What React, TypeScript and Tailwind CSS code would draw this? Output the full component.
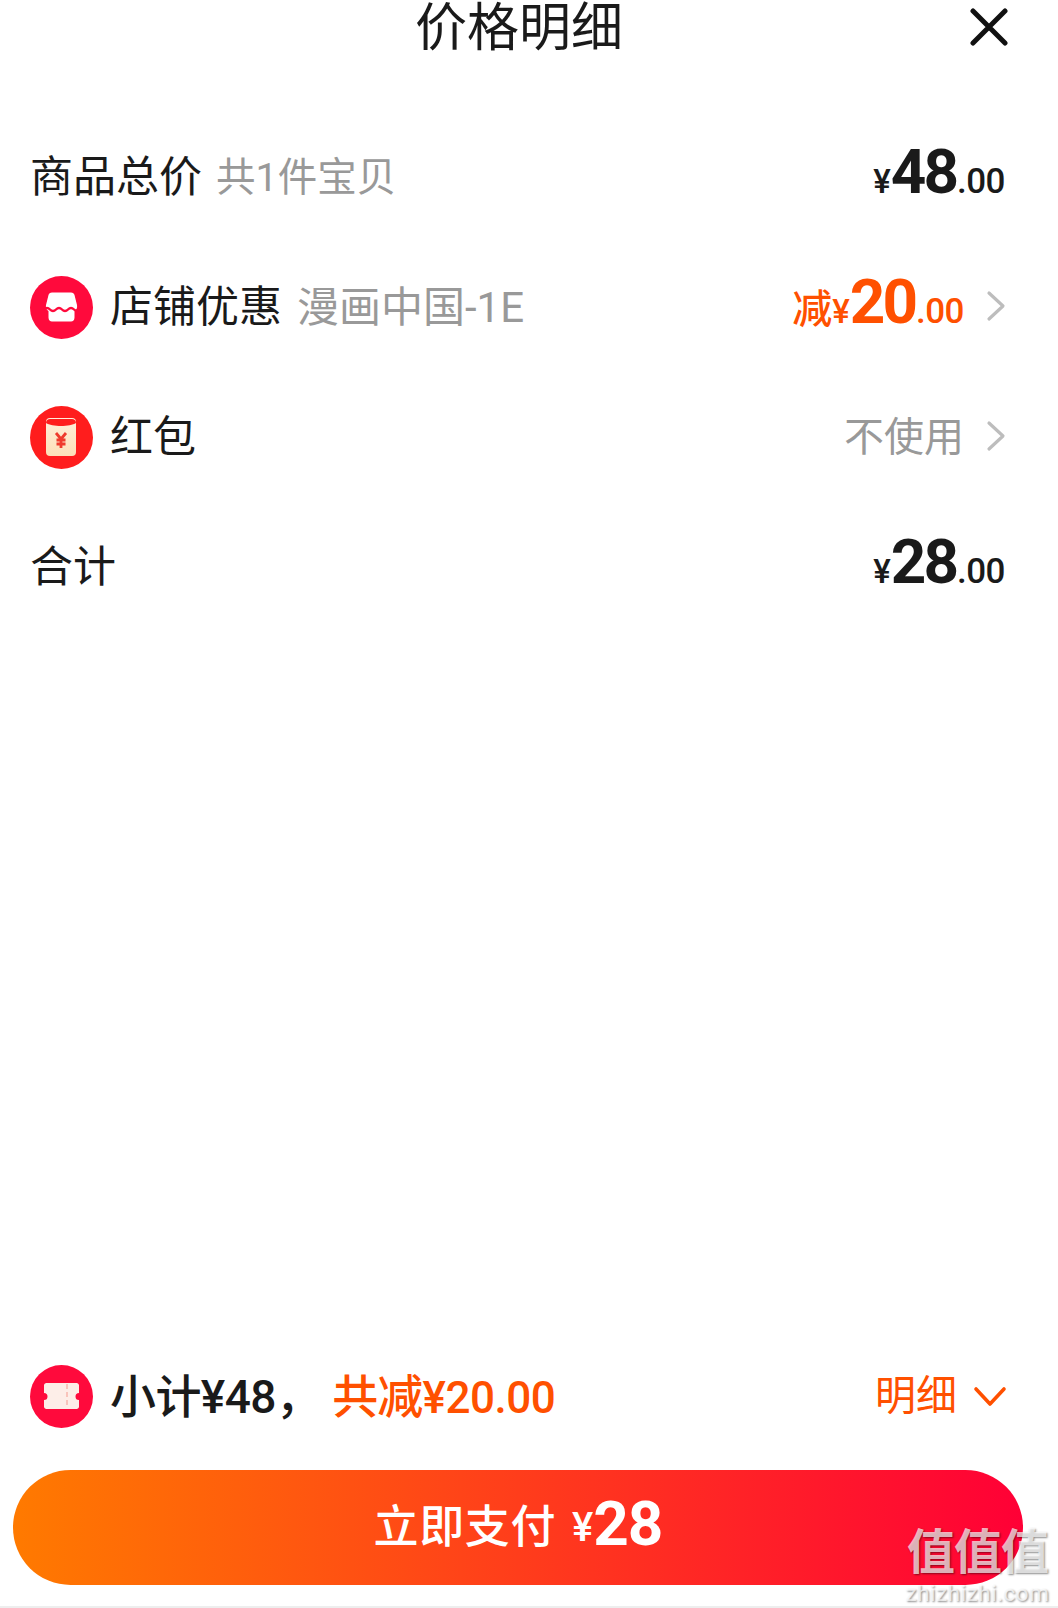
import React from "react";

const cjk = "font-['Roboto','Noto_Sans_CJK_SC',sans-serif]";

const Chevron = () => (
    <svg width="20" height="32" viewBox="0 0 20 32" fill="none" className="block">
        <path d="M3 3 L17 16 L3 29" stroke="#bdbdbd" strokeWidth="3.2" strokeLinecap="round" strokeLinejoin="round" />
    </svg>
);

const ShopIcon = () => (
    <svg width="63" height="63" viewBox="0 0 63 63" className="block shrink-0">
        <circle cx="31.5" cy="31.5" r="31.5" fill="#ff0a3c" />
        <path d="M22 16.500 H41 C43 16.500 44 17.500 44.500 19 L47 29 C47.500 32 46.500 34 44.500 35 V41.500 C44.500 44 43 45.500 41 45.500 H22 C20 45.500 18.500 44 18.500 41.500 V35 C16.500 34 15.500 32 16 29 L18.500 19 C19 17.500 20 16.500 22 16.500 Z" fill="#fff" />
        <path d="M14 33.500 C16 31.500 18 31.500 20 33.500 C22 35.500 24 35.500 26 33.500 C28 31.500 30 31.500 32 33.500 C34 35.500 36 35.500 38 33.500 C40 31.500 42 31.500 44 33.500 C46 35.500 48 34.500 49 33" stroke="#ff0a3c" strokeWidth="2.400" fill="none" />
    </svg>
);

const HongbaoIcon = () => (
    <svg width="63" height="63" viewBox="0 0 63 63" className="block shrink-0">
        <defs>
            <linearGradient id="env" x1="0" y1="0" x2="0" y2="1">
                <stop offset="0" stopColor="#ffeeda" />
                <stop offset="1" stopColor="#fde0b8" />
            </linearGradient>
        </defs>
        <circle cx="31.5" cy="31.5" r="31.5" fill="#ff1d1d" />
        <rect x="16" y="12" width="30" height="38" rx="4" fill="url(#env)" />
        <path d="M16 17 C16 14 18 13 20 13 H42 C44 13 46 14 46 17 C40 21 22 21 16 17 Z" fill="#ff1d1d" />
        <path d="M26 27 L31 33 L36 27 M31 33 V42 M26.500 34 H35.500 M26.500 38 H35.500" stroke="#ef3b2d" strokeWidth="2.800" fill="none" />
    </svg>
);

const TicketIcon = () => (
    <svg width="63" height="63" viewBox="0 0 63 63" className="block shrink-0">
        <circle cx="31.5" cy="31.5" r="31.5" fill="#ff0a3c" />
        <path d="M16.500 18 H46.500 C48 18 49 19 49 20.500 V28 A3.500 3.500 0 0 0 49 35 V41.500 C49 43 48 44 46.500 44 H16.500 C15 44 14 43 14 41.500 V35 A3.500 3.500 0 0 0 14 28 V20.500 C14 19 15 18 16.500 18 Z" fill="#fdeee8" />
        <path d="M37 19 V43" stroke="#f9c4bb" strokeWidth="2" strokeDasharray="5 3" />
    </svg>
);

// 金额: ¥ + big integer + small decimals
const Amount = ({ value, color }: { value: string; color: string }) => (
    <div className={`flex items-baseline font-['Roboto',sans-serif] ${color}`}>
        <span className="text-[33px] font-medium">¥</span>
        <span className="text-[62px] leading-none font-bold tracking-[-3px]">{value}</span>
        <span className="text-[35px] font-medium tracking-[-0.5px] ml-[1px]">.00</span>
    </div>
);

export default function App() {
    return (
        <div className={`relative w-[1058px] h-[1608px] bg-white overflow-hidden text-[#1a1a1a] ${cjk}`}>
            <div className="flex flex-col h-full">
                {/* header */}
                <div className="relative h-[58px] flex items-center justify-center">
                    <h1 className="text-[52px] leading-none font-normal mr-[20px]">价格明细</h1>
                    <svg width="38" height="38" viewBox="0 0 38 38" className="absolute right-[50px] top-[8px]">
                        <path d="M3 3 L35 35 M35 3 L3 35" stroke="#111" strokeWidth="5" strokeLinecap="round" />
                    </svg>
                </div>

                <div className="flex flex-col pl-[30px] pr-[53px] pt-[87px] gap-[65px]">
                    <div className="flex items-center justify-between h-[65px]">
                        <div className="flex items-center gap-[14px] text-[43px] leading-none">
                            <span>商品总价</span>
                            <span className="text-[39.5px] text-[#999]">共1件宝贝</span>
                        </div>
                        <div className="mb-[6px]"><Amount value="48" color="text-[#1a1a1a]" /></div>
                    </div>

                    <div className="flex items-center justify-between h-[65px]">
                        <div className="flex items-center text-[42px] leading-none">
                            <ShopIcon />
                            <span className="ml-[17px] text-[43px]">店铺优惠</span>
                            <span className="ml-[15px] text-[#999]">漫画中国-1E</span>
                        </div>
                        <div className="flex items-center gap-[22px]">
                            <div className="flex items-baseline text-[#ff5000] mb-[6px]">
                                <span className="text-[40px] font-medium leading-none">减</span>
                                <Amount value="20" color="text-[#ff5000]" />
                            </div>
                            <div className="-mr-[1px] mb-[4px]"><Chevron /></div>
                        </div>
                    </div>

                    <div className="flex items-center justify-between h-[65px]">
                        <div className="flex items-center text-[43px] leading-none">
                            <HongbaoIcon />
                            <span className="ml-[17px]">红包</span>
                        </div>
                        <div className="flex items-center gap-[22px]">
                            <span className="text-[40px] leading-none text-[#999]">不使用</span>
                            <div className="-mr-[1px] mb-[4px]"><Chevron /></div>
                        </div>
                    </div>

                    <div className="flex items-center justify-between h-[65px]">
                        <span className="text-[43px] leading-none">合计</span>
                        <div className="mb-[6px]"><Amount value="28" color="text-[#1a1a1a]" /></div>
                    </div>
                </div>

                <div className="flex-1" />

                {/* bottom summary */}
                <div className="flex items-center justify-between pl-[30px] pr-[53px] h-[65px]">
                    <div className="flex items-center">
                        <TicketIcon />
                        <span className="ml-[17px] text-[46px] leading-none font-medium tracking-[-0.6px]">小计¥48，</span>
                        <span className="ml-[11px] text-[46px] leading-none font-medium tracking-[-0.8px] text-[#ff5000]">
                            共减<span className="text-[44px] tracking-[-0.5px]">¥20.00</span>
                        </span>
                    </div>
                    <div className="flex items-center gap-[16px] text-[#ff5000] -mr-[2px]">
                        <span className="text-[41px] leading-none">明细</span>
                        <svg width="34" height="22" viewBox="0 0 34 22" fill="none" className="block">
                            <path d="M3 3 L17 18 L31 3" stroke="#ff5000" strokeWidth="3.600" strokeLinecap="round" strokeLinejoin="round" />
                        </svg>
                    </div>
                </div>

                <div className="mx-[13px] mr-[35px] mt-[41px] mb-[23px] h-[115px] rounded-full bg-[linear-gradient(to_right,#ff7a00,#ff0036)] flex items-center justify-center text-white">
                    <span className="text-[45px] leading-none font-medium tracking-[0.6px]">立即支付</span>
                    <span className="ml-[16px] text-[40px] leading-none font-medium">¥</span>
                    <span className="text-[62px] leading-none font-bold tracking-[-1px] -mt-[8px]">28</span>
                </div>
            </div>

            {/* watermark */}
            <div className="absolute left-[905px] top-[1526px] w-[145px] flex flex-col items-center text-white/70 [text-shadow:1px_1px_2px_rgba(0,0,0,0.45)]">
                <span className="text-[48px] leading-[54px] font-bold tracking-[-1px] whitespace-nowrap">值值值</span>
                <span className="text-[22.5px] leading-[26px] tracking-[0.5px]">zhizhizhi.com</span>
            </div>

            <div className="absolute left-0 right-0 bottom-0 h-[2px] bg-[#eeeeee]" />
        </div>
    );
}
